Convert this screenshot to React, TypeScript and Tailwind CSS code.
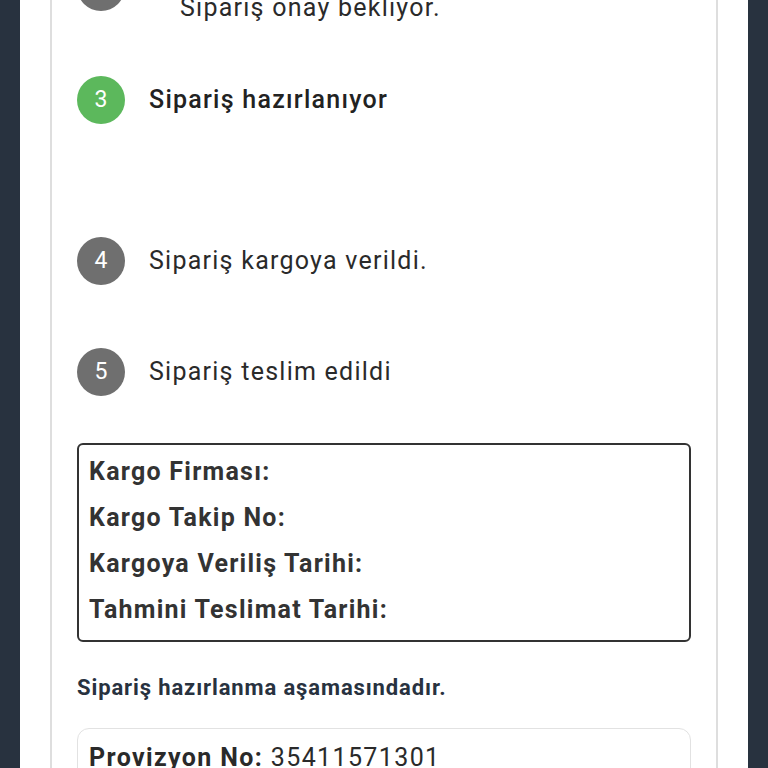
import React from "react";

const font = { fontFamily: "Roboto, 'Noto Sans', sans-serif" };

function StepCircle({ n, active }: { n: number; active?: boolean }) {
  return (
    <div
      className={`flex h-12 w-12 shrink-0 items-center justify-center rounded-full text-[23px] text-white ${
        active ? "bg-[#5cb85c]" : "bg-[#6f6f6f]"
      }`}
    >
      {n}
    </div>
  );
}

const cargoRows = [
  "Kargo Firması:",
  "Kargo Takip No:",
  "Kargoya Veriliş Tarihi:",
  "Tahmini Teslimat Tarihi:",
];

export default function App() {
  return (
    <div className="h-[768px] overflow-hidden bg-[#28323f] px-[20px]" style={font}>
      <div className="flex h-full flex-col bg-white px-[30px]">
        <div className="flex flex-1 flex-col border-x-2 border-[#dedede] px-[25px]">
          {/* step 2 */}
          <div className="-mt-[37px] flex items-start">
            <StepCircle n={2} />
            <p className="ml-[55px] mt-[31px] text-[25px] leading-[28px] tracking-[0.05em] text-[#2a2a2a]">
              Sipariş onay bekliyor.
            </p>
          </div>

          {/* step 3 */}
          <div className="mt-[54px] flex items-center gap-6">
            <StepCircle n={3} active />
            <p className="text-[25px] font-medium leading-[28px] tracking-[0.05em] text-[#222]">
              Sipariş hazırlanıyor
            </p>
          </div>

          {/* step 4 */}
          <div className="mt-[113px] flex items-center gap-6">
            <StepCircle n={4} />
            <p className="text-[25px] leading-[28px] tracking-[0.05em] text-[#2a2a2a]">
              Sipariş kargoya verildi.
            </p>
          </div>

          {/* step 5 */}
          <div className="mt-[63px] flex items-center gap-6">
            <StepCircle n={5} />
            <p className="text-[25px] leading-[28px] tracking-[0.05em] text-[#2a2a2a]">
              Sipariş teslim edildi
            </p>
          </div>

          <div className="mt-[47px] rounded-[6px] border-2 border-[#333] px-[10px] pb-[7px] pt-[4px]">
            {cargoRows.map((row) => (
              <p
                key={row}
                className="text-[25px] font-bold leading-[46px] tracking-[0.05em] text-[#333]"
              >
                {row}
              </p>
            ))}
          </div>

          <p className="mt-[32px] text-[22px] font-bold leading-[28px] tracking-[0.04em] text-[#28323f]">
            Sipariş hazırlanma aşamasındadır.
          </p>

          <div className="mt-[26px] rounded-[12px] border border-[#e2e2e2] px-[11px] pb-4 pt-[15px]">
            <p className="text-[25px] leading-[28px] tracking-[0.055em] text-[#2a2a2a]">
              <span className="font-bold">Provizyon No:</span> 35411571301
            </p>
          </div>
        </div>
      </div>
    </div>
  );
}
